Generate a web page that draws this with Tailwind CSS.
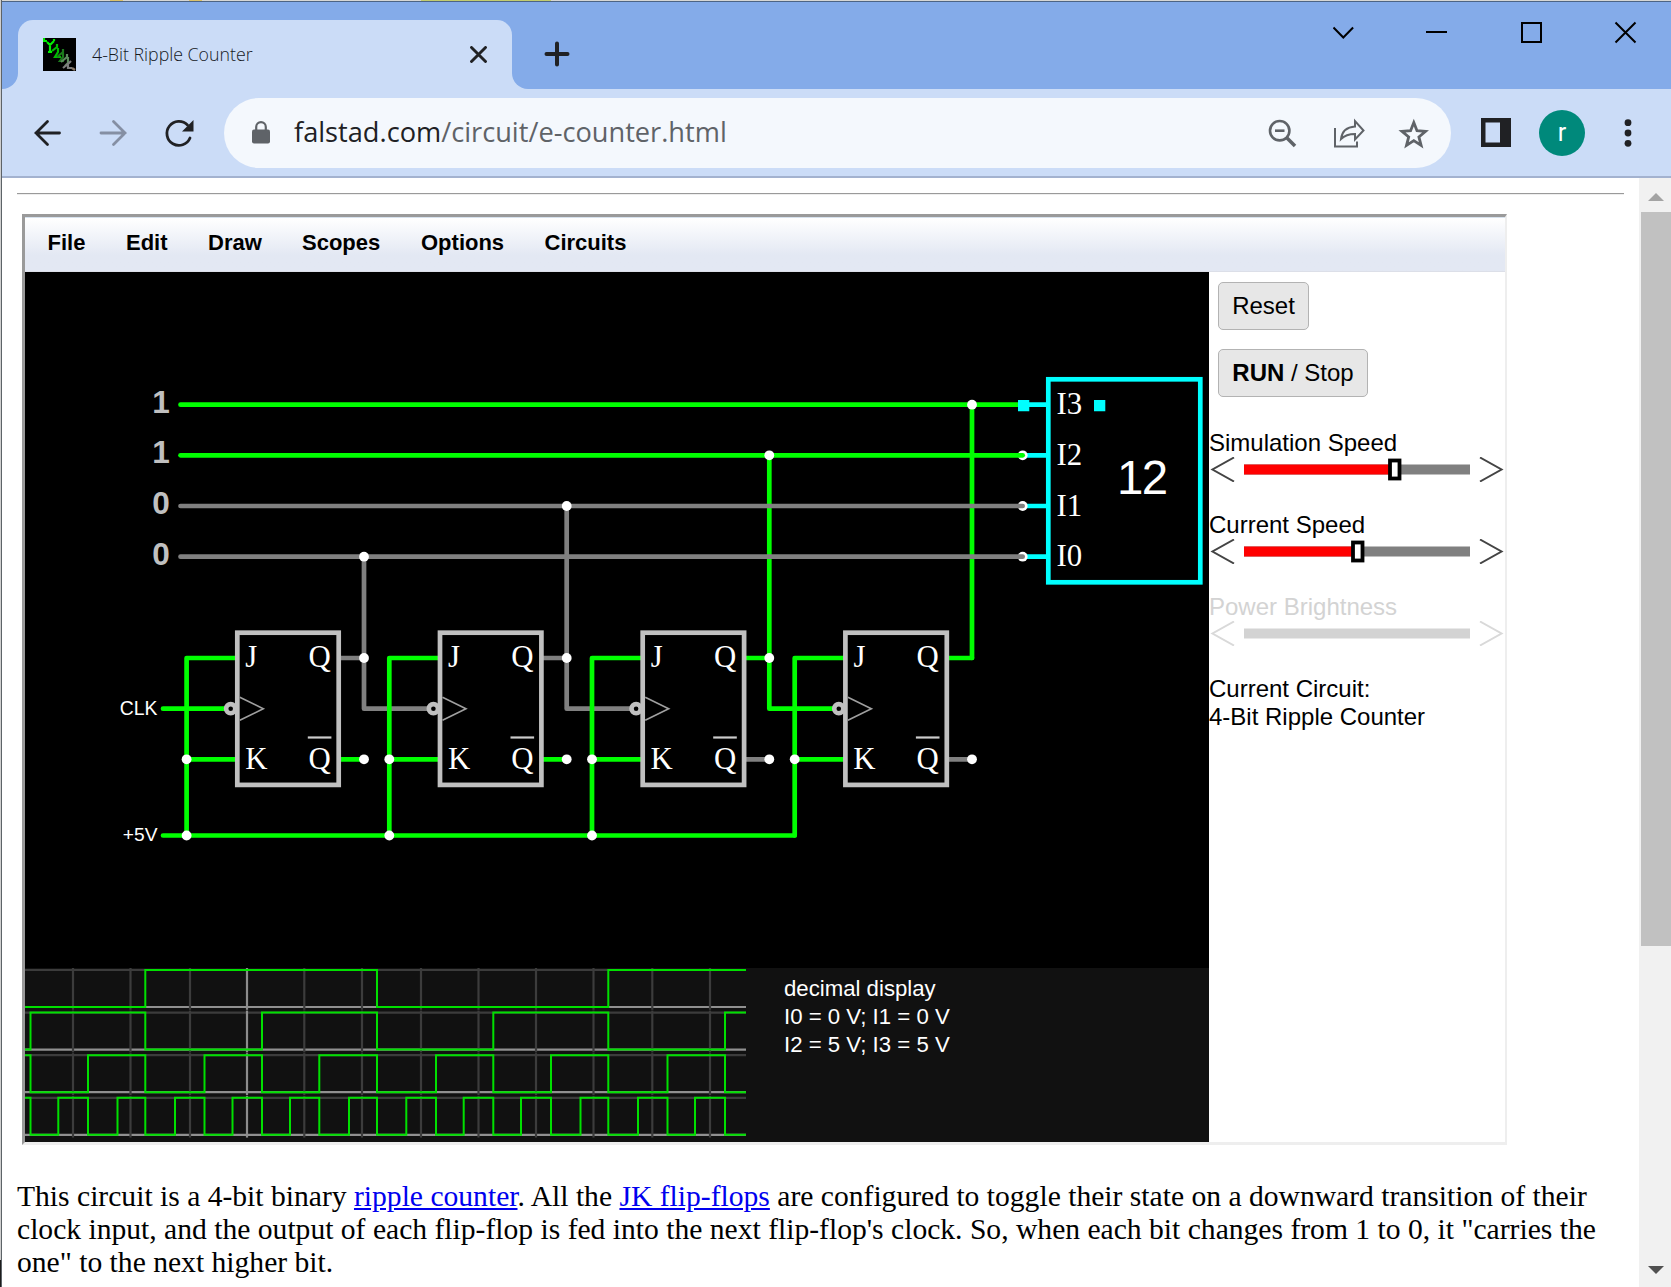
<!DOCTYPE html>
<html lang="en">
<head>
<meta charset="utf-8">
<title>4-Bit Ripple Counter</title>
<script src="https://cdn.jsdelivr.net/npm/@tailwindcss/browser@4"></script>
</head>
<body class="w-[1671px] h-[1287px] overflow-hidden bg-white flex">
<div class="w-px shrink-0 flex flex-col bg-[#cfcfcf]"><div class="mt-auto h-[27px] bg-[#1c1c1c]"></div></div>
<div class="flex flex-col w-[1670px] h-[1287px] border-l border-[#5d6368] font-['Open_Sans',sans-serif]">
  <div class="h-px shrink-0 bg-[#d6d6d4] flex"><div class="w-[108px]"></div><div class="w-[13px] bg-[#dcc26a]"></div><div class="w-[66px]"></div><div class="w-[13px] bg-[#dcc26a]"></div><div class="w-[219px]"></div><div class="w-[130px] bg-[#c3cc6e]"></div></div>
  <div class="h-px shrink-0 bg-[#4d6484]"></div>

  <!-- tab strip -->
  <div class="h-[87px] shrink-0 bg-[#84abe9] flex items-start">
    <div class="w-4 h-[87px] flex flex-col justify-end bg-[#cbdcf7]"><div class="h-full w-full bg-[#84abe9] rounded-br-[16px]"></div></div>
    <div class="mt-[18px] h-[69px] w-[494px] bg-[#cbdcf7] rounded-t-[15px] flex items-center pl-[25px] pr-[25px]">
      <svg class="w-[33px] h-[33px] shrink-0" viewBox="0 0 33 33"><rect width="33" height="33"/><g fill="none" stroke-width="2.200"><path stroke="#0e0" d="M1 0v3h3M4 4l3 3 4-4M7 6v8M5 14h4M11 3V1"/><path stroke="#0b0" d="M9 13l5-4v-3M15 10v4l-3 5h6"/><path stroke="#1c7a1c" d="M14 19l6-5v-3M20 14v5l-3 4h4"/><path stroke="#5c8a5c" d="M18 24l6-5v-3M25 19v6l-3 3"/><path stroke="#7c7c7c" d="M20 30l6-5 2-2M25 26v4h4"/><path stroke="#876" d="M29 30l3 2"/></g></svg>
      <div class="ml-4 text-[17.750px] font-light text-[#16191e] whitespace-nowrap leading-none">4-Bit Ripple Counter</div>
      <svg class="ml-auto w-[17px] h-[17px]" viewBox="0 0 17 17" stroke="#202124" stroke-width="2.900" stroke-linecap="round"><path d="M1.500 1.500l14 14M15.500 1.500l-14 14"/></svg>
    </div>
    <div class="w-4 h-[87px] bg-[#cbdcf7]"><div class="h-full w-full bg-[#84abe9] rounded-bl-[16px]"></div></div>
    <svg class="ml-4 mt-[39px] w-[26px] h-[26px]" viewBox="0 0 26 26" stroke="#202124" stroke-width="4" stroke-linecap="round"><path d="M13 2.500v21M2.500 13h21"/></svg>
    <svg class="ml-auto mt-[17px] w-[304px] h-[28px]" viewBox="1333 19 304 28" fill="none" stroke="#000" stroke-width="2"><path d="M1333.500 27.500l9.800 10 9.800-10M1426 32h21M1522 23h19v19h-19zM1615.500 22.500l20 20M1635.500 22.500l-20 20"/></svg>
    <div class="w-[34px]"></div>
  </div>

  <!-- toolbar -->
  <div class="h-[89px] shrink-0 bg-[#cbdcf7] border-b-2 border-[#a3b2cf] flex items-center pl-[32px]">
    <svg class="w-[160px] h-[32px] shrink-0" viewBox="34 116 160 32" fill="none" stroke-width="2.800" stroke-linecap="round"><path stroke="#202124" d="M59.500 132H36M47.500 120.500L36 132 47.500 143.500"/><path stroke="#858fa3" d="M101 132h24M113.500 120.500L125 132 113.500 143.500"/><path stroke="#202124" d="M190 137a12 12 0 1 1-2.500-13"/><path fill="#202124" stroke="none" d="M193.500 119v11.500h-11.500z"/></svg>
    <div class="ml-[30px] w-[1227px] h-[70px] rounded-full bg-[#f4f8fd] flex items-center pl-[28px]">
      <svg class="w-[18px] h-[24px]" viewBox="0 0 18 24"><rect y="8.500" width="18" height="14" rx="2" fill="#5f6368"/><path d="M4.200 10V6a4.800 4.800 0 0 1 9.600 0v4" fill="none" stroke="#5f6368" stroke-width="2.200"/></svg>
      <div class="ml-6 pb-[2px] text-[27.200px] leading-none whitespace-nowrap text-[#5f6368]"><span class="text-[#202124]">falstad.com</span>/circuit/e-counter.html</div>
      <svg class="ml-auto mr-[22px] w-[162px] h-[32px]" viewBox="1267 116 162 32" fill="none" stroke="#5f6368" stroke-width="2.600"><circle cx="1279.700" cy="129.700" r="9.700"/><path d="M1275 129.700h9.500"/><path stroke-width="3.600" d="M1286.500 136.500l8.500 8.500"/><path stroke-width="2" d="M1335 127v18.500h22v-5M1341 138c1-8 6-12 14-12.500v-5.500l8.500 9.500-8.500 9v-5.500c-6 0-10 1-14 5z"/><path stroke-width="2.800" d="M1413.800 121.500l3.200 8.200 8.600.6-6.700 5.600 2.200 8.500-7.300-4.800-7.300 4.800 2.200-8.500-6.700-5.600 8.600-.6z"/></svg>
    </div>
    <svg class="ml-[30px] w-[30px] h-[29px]" viewBox="0 0 30 29"><rect width="30" height="29" fill="#202124"/><rect x="4.500" y="4.500" width="14.500" height="20" fill="#cbdcf7"/></svg>
    <div class="ml-[28px] w-[46px] h-[46px] rounded-full bg-[#00897b] text-white text-[25px] flex items-center justify-center leading-none font-['Roboto']">r</div>
    <svg class="ml-[38.500px] w-[8px] h-[28px]" viewBox="0 0 8 28" fill="#202124"><circle cx="4" cy="3.700" r="3.400"/><circle cx="4" cy="14" r="3.400"/><circle cx="4" cy="24.300" r="3.400"/></svg>
  </div>

  <!-- page -->
  <div class="flex flex-1 min-h-0">
    <div class="flex-1 pl-[15px] pt-[15px] bg-white">
      <div class="w-[1607px] h-[2px] border-t border-[#9a9a9a] bg-[#eeeeee]"></div>
      <div class="ml-[5px] mt-[19px] w-[1485px] h-[931px] border-l-[3px] border-t-[3px] border-r-2 border-b-[3px] border-t-[#9a9a9a] border-l-[#9a9a9a] border-r-[#eeeeee] border-b-[#eeeeee] font-['Liberation_Sans',Arial,sans-serif] text-black flex flex-col">
        <div class="h-[55px] shrink-0 border-t border-b border-t-[#d7e2ee] border-b-[#dcdfe8] bg-linear-to-b from-white to-[#e3e8f3] to-70% flex font-bold text-[22px] leading-[50px] pl-[22.500px]">
          <span class="w-[78.500px]">File</span><span class="w-[82px]">Edit</span><span class="w-[94px]">Draw</span><span class="w-[119px]">Scopes</span><span class="w-[123.500px]">Options</span><span>Circuits</span>
        </div>
        <div class="flex flex-1 min-h-0">
          <svg id="cv" class="w-[1184px] h-[870px] shrink-0 bg-black" viewBox="25 272 1184 870"></svg>
          <div class="flex-1 min-w-0 text-[24px] leading-[28px]">
            <div class="pl-[9px] pt-[10px] flex flex-col items-start gap-[19px]">
              <div class="h-12 w-[91px] rounded-[5px] border border-[#b3b3b3] bg-[#e7e7e7] flex items-center justify-center">Reset</div>
              <div class="h-12 w-[150px] rounded-[5px] border border-[#b3b3b3] bg-[#e7e7e7] flex items-center justify-center whitespace-pre"><b>RUN</b> / Stop</div>
            </div>
            <div class="mt-[32px] h-[82px] whitespace-nowrap">Simulation Speed
              <svg class="block w-[295px] h-[25px]" viewBox="0 0 295 25"><path d="M25 .5L3.500 12.500 25 24.500M271 .5L292.500 12.500 271 24.500" fill="none" stroke="#444" stroke-width="2"/><path d="M35 12.500h226" stroke="#808080" stroke-width="10"/><path d="M35 12.500h146" stroke="red" stroke-width="10"/><rect x="181" y="3.500" width="9.500" height="18" fill="#fff" stroke="#000" stroke-width="3.800"/></svg>
            </div>
            <div class="h-[82px] whitespace-nowrap">Current Speed
              <svg class="block w-[295px] h-[25px]" viewBox="0 0 295 25"><path d="M25 .5L3.500 12.500 25 24.500M271 .5L292.500 12.500 271 24.500" fill="none" stroke="#444" stroke-width="2"/><path d="M35 12.500h226" stroke="#808080" stroke-width="10"/><path d="M35 12.500h110" stroke="red" stroke-width="10"/><rect x="144" y="3.500" width="9.500" height="18" fill="#fff" stroke="#000" stroke-width="3.800"/></svg>
            </div>
            <div class="h-[82px] whitespace-nowrap text-[#d3d3d3]">Power Brightness
              <svg class="block w-[295px] h-[25px]" viewBox="0 0 295 25"><path d="M25 .5L3.500 12.500 25 24.500M271 .5L292.500 12.500 271 24.500" fill="none" stroke="#d9d9d9" stroke-width="2"/><path d="M35 12.500h226" stroke="#d3d3d3" stroke-width="10"/></svg>
            </div>
            <div>Current Circuit:</div>
            <div class="whitespace-nowrap">4-Bit Ripple Counter</div>
          </div>
        </div>
      </div>
      <div class="mt-[35px] font-['Liberation_Serif',serif] text-[29.600px] leading-[33px] text-black whitespace-nowrap">
        <div>This circuit is a 4-bit binary <a class="text-[#0000ee] underline">ripple counter</a>. All the <a class="text-[#0000ee] underline">JK flip-flops</a> are configured to toggle their state on a downward transition of their</div>
        <div>clock input, and the output of each flip-flop is fed into the next flip-flop's clock. So, when each bit changes from 1 to 0, it "carries the</div>
        <div>one" to the next higher bit.</div>
      </div>
    </div>
    <div class="w-8 shrink-0 bg-[#f1f1f1] flex flex-col pl-[2px]">
      <div class="h-[34px] flex items-center justify-center"><svg class="mt-[3px] w-4 h-2" viewBox="0 0 16 8"><path d="M0 8L8 0l8 8z" fill="#a3a3a3"/></svg></div>
      <div class="h-[734px] bg-[#c1c1c1]"></div>
      <div class="mt-auto h-[21px] flex justify-center"><svg class="w-4 h-2" viewBox="0 0 16 8"><path d="M0 0h16L8 8z" fill="#505050"/></svg></div>
    </div>
  </div>
</div>
<script>
const G='#00ff00', N='#808080', C='#c0c0c0', Y='#00ffff';
const line=(d,c,w=4.7)=>`<path d="${d}" stroke="${c}" stroke-width="${w}" fill="none" stroke-linecap="round" stroke-linejoin="round"/>`;
const dot=(x,y)=>`<circle cx="${x}" cy="${y}" r="4.9" fill="#fff"/>`;
const text=(x,y,s,t,f='Liberation Serif',c='#fff',extra='')=>`<text x="${x}" y="${y}" font-size="${s}" font-family="${f}" fill="${c}" ${extra}>${t}</text>`;
const SA='Liberation Sans';
let o='';
const rows=[404.7,455.3,506,556.7];
// decimal display pins
rows.forEach((y,i)=>{ o+=line(`M1022.7 ${y}H1048`,Y); if(i) o+=dot(1022.7,y); });
// Q output taps
const qx=[364,566.7,769.3,972], state=[N,N,G,G];
qx.forEach((x,i)=>{ const y=rows[3-i];
  o+=line(i<3?`M${x} ${y}V708.7H${x+69}`:`M${x} ${y}V658`,state[i]);
  o+=line(`M${x-25} 658H${x}`,state[i]);
  o+=line(`M${x-25} 759.3H${x}`,i<2?G:N);
});
// J/K feed from +5V
[186.6,389.3,592,794.7].forEach(x=>{ o+=line(`M${x} 835.5V658H${x+50}M${x} 759.3H${x+50}`,G); });
o+=line('M163 835.5H794.7M163 708.7H228',G);
// bus lines
rows.forEach((y,i)=>{ o+=line(`M180.500 ${y}H1022.7`,i<2?G:N);
  o+=text(152.200,y+8.1,31.500,i<2?'1':'0',SA,C,'font-weight="bold"'); });
// flip-flops
for(let i=0;i<4;i++){ const x=237.3+202.7*i;
  o+=`<rect x="${x}" y="632.7" width="101.4" height="152.2" fill="#000" stroke="${C}" stroke-width="4.7"/>`;
  o+=`<path d="M${x+2.500} 697.300L${x+26} 708.700 ${x+2.500} 720.300" fill="none" stroke="#a0a0a0" stroke-width="1.6"/>`;
  o+=`<circle cx="${x-6.600}" cy="708.700" r="4.600" fill="#000" stroke="${C}" stroke-width="4.600"/>`;
  o+=text(x+8,667.3,30.8,'J')+text(x+7.9,768.6,30.8,'K')+text(x+71.2,667.3,30.8,'Q')+text(x+71.2,768.6,30.8,'Q');
  o+=`<path d="M${x+70.500} 737.500h23.600" stroke="#ccc" stroke-width="2.2"/>`;
}
qx.forEach((x,i)=>{ o+=dot(x,rows[3-i])+dot(x,759.3); if(i<3) o+=dot(x,658); });
[186.6,389.3,592,794.7].forEach((x,i)=>{ o+=dot(x,759.3); if(i<3) o+=dot(x,835.5); });
// decimal display
o+=`<rect x="1048.300" y="379.300" width="152" height="203" fill="#000" stroke="${Y}" stroke-width="4.700"/>`;
['I3','I2','I1','I0'].forEach((t,i)=>o+=text(1056.4,rows[i]+9.5,30.8,t));
o+=text(1142.500,494.300,47.4,'12',SA,'#fff','text-anchor="middle" textLength="51"');
o+=`<path d="M1018 400h11.300v11.300h-11.300zM1094 400h11.300v11.300h-11.300z" fill="${Y}"/>`;
o+=text(157.500,714.500,19.4,'CLK',SA,'#fff','text-anchor="end"')+text(157.500,840.500,19.2,'+5V',SA,'#fff','text-anchor="end"');
// scopes
o+='<rect x="25" y="968" width="1184" height="174" fill="#111"/>';
const e=[30.5,58.3,88,117.5,145.3,175,204.5,232.5,262,290,319.3,349,377,406.3,436,463.7,493.3,521,551,580.5,608.3,638,667.5,695,725];
[8,4,2,1].forEach((step,r)=>{ const t=970+r*42.6, b=t+37;
  o+=`<path d="M25 ${t}H746" stroke="#3c3c3c" stroke-width="2.200"/><path d="M25 ${b}H746" stroke="#909090" stroke-width="2.200"/>`;
  [73,130.5,190,247,304.3,362,421,478.5,536,593.5,652.3,710].forEach((x,i)=>o+=`<path d="M${x} ${t-2}V${b+2.8}" stroke="${i==3?'#8c8c8c':'#3c3c3c'}" stroke-width="2.200"/>`);
  const edges=e.filter((_,i)=> step==8?[4,12,20].includes(i): i%step==0);
  let hi = r>=2, d=`M25 ${hi?t:b}`;
  edges.forEach(x=>{ hi=!hi; d+=`H${x}V${hi?t:b}`; });
  o+=`<path d="${d}H746" fill="none" stroke="#00e000" stroke-width="2"/>`;
});
o+=text(784,996,22.2,'decimal display',SA)+text(784,1024,22.2,'I0 = 0 V; I1 = 0 V',SA)+text(784,1052,22.2,'I2 = 5 V; I3 = 5 V',SA);
document.getElementById('cv').innerHTML=o;
</script>
</body>
</html>
